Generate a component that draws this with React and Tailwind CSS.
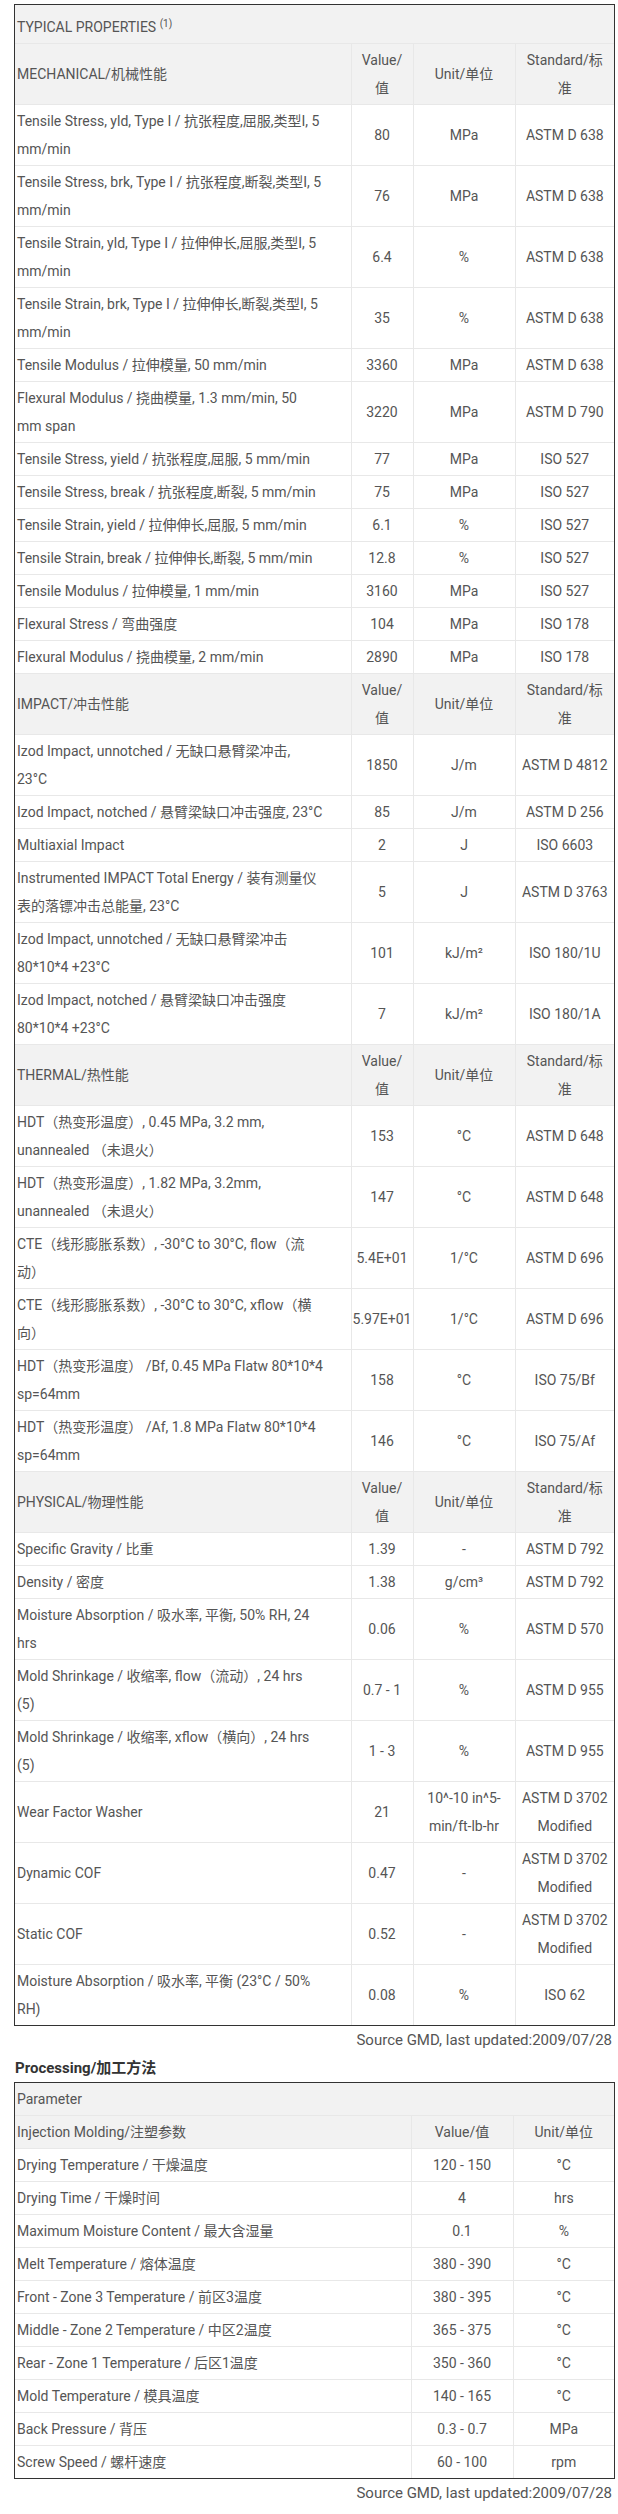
import React from "react";

const mechanical = [
  [["Tensile Stress, yld, Type I / 抗张程度,屈服,类型I, 5", "mm/min"], "80", ["MPa"], ["ASTM D 638"]],
  [["Tensile Stress, brk, Type I / 抗张程度,断裂,类型I, 5", "mm/min"], "76", ["MPa"], ["ASTM D 638"]],
  [["Tensile Strain, yld, Type I / 拉伸伸长,屈服,类型I, 5", "mm/min"], "6.4", ["%"], ["ASTM D 638"]],
  [["Tensile Strain, brk, Type I / 拉伸伸长,断裂,类型I, 5", "mm/min"], "35", ["%"], ["ASTM D 638"]],
  [["Tensile Modulus / 拉伸模量, 50 mm/min"], "3360", ["MPa"], ["ASTM D 638"]],
  [["Flexural Modulus / 挠曲模量, 1.3 mm/min, 50", "mm span"], "3220", ["MPa"], ["ASTM D 790"]],
  [["Tensile Stress, yield / 抗张程度,屈服, 5 mm/min"], "77", ["MPa"], ["ISO 527"]],
  [["Tensile Stress, break / 抗张程度,断裂, 5 mm/min"], "75", ["MPa"], ["ISO 527"]],
  [["Tensile Strain, yield / 拉伸伸长,屈服, 5 mm/min"], "6.1", ["%"], ["ISO 527"]],
  [["Tensile Strain, break / 拉伸伸长,断裂, 5 mm/min"], "12.8", ["%"], ["ISO 527"]],
  [["Tensile Modulus / 拉伸模量, 1 mm/min"], "3160", ["MPa"], ["ISO 527"]],
  [["Flexural Stress / 弯曲强度"], "104", ["MPa"], ["ISO 178"]],
  [["Flexural Modulus / 挠曲模量, 2 mm/min"], "2890", ["MPa"], ["ISO 178"]],
];

const impact = [
  [["Izod Impact, unnotched / 无缺口悬臂梁冲击,", "23°C"], "1850", ["J/m"], ["ASTM D 4812"]],
  [["Izod Impact, notched / 悬臂梁缺口冲击强度, 23°C"], "85", ["J/m"], ["ASTM D 256"]],
  [["Multiaxial Impact"], "2", ["J"], ["ISO 6603"]],
  [["Instrumented IMPACT Total Energy / 装有测量仪", "表的落镖冲击总能量, 23°C"], "5", ["J"], ["ASTM D 3763"]],
  [["Izod Impact, unnotched / 无缺口悬臂梁冲击", "80*10*4 +23°C"], "101", ["kJ/m²"], ["ISO 180/1U"]],
  [["Izod Impact, notched / 悬臂梁缺口冲击强度", "80*10*4 +23°C"], "7", ["kJ/m²"], ["ISO 180/1A"]],
];

const thermal = [
  [["HDT（热变形温度）, 0.45 MPa, 3.2 mm,", "unannealed （未退火）"], "153", ["°C"], ["ASTM D 648"]],
  [["HDT（热变形温度）, 1.82 MPa, 3.2mm,", "unannealed （未退火）"], "147", ["°C"], ["ASTM D 648"]],
  [["CTE（线形膨胀系数）, -30°C to 30°C, flow（流", "动）"], "5.4E+01", ["1/°C"], ["ASTM D 696"]],
  [["CTE（线形膨胀系数）, -30°C to 30°C, xflow（横", "向）"], "5.97E+01", ["1/°C"], ["ASTM D 696"]],
  [["HDT（热变形温度） /Bf, 0.45 MPa Flatw 80*10*4", "sp=64mm"], "158", ["°C"], ["ISO 75/Bf"]],
  [["HDT（热变形温度） /Af, 1.8 MPa Flatw 80*10*4", "sp=64mm"], "146", ["°C"], ["ISO 75/Af"]],
];

const physical = [
  [["Specific Gravity / 比重"], "1.39", ["-"], ["ASTM D 792"]],
  [["Density / 密度"], "1.38", ["g/cm³"], ["ASTM D 792"]],
  [["Moisture Absorption / 吸水率, 平衡, 50% RH, 24", "hrs"], "0.06", ["%"], ["ASTM D 570"]],
  [["Mold Shrinkage / 收缩率, flow（流动）, 24 hrs", "(5)"], "0.7 - 1", ["%"], ["ASTM D 955"]],
  [["Mold Shrinkage / 收缩率, xflow（横向）, 24 hrs", "(5)"], "1 - 3", ["%"], ["ASTM D 955"]],
  [["Wear Factor Washer"], "21", ["10^-10 in^5-", "min/ft-lb-hr"], ["ASTM D 3702", "Modified"]],
  [["Dynamic COF"], "0.47", ["-"], ["ASTM D 3702", "Modified"]],
  [["Static COF"], "0.52", ["-"], ["ASTM D 3702", "Modified"]],
  [["Moisture Absorption / 吸水率, 平衡 (23°C / 50%", "RH)"], "0.08", ["%"], ["ISO 62"]],
];

const sections = [
  { title: "MECHANICAL/机械性能", rows: mechanical },
  { title: "IMPACT/冲击性能", rows: impact },
  { title: "THERMAL/热性能", rows: thermal },
  { title: "PHYSICAL/物理性能", rows: physical },
];

const processing = [
  ["Drying Temperature / 干燥温度", "120 - 150", "°C"],
  ["Drying Time / 干燥时间", "4", "hrs"],
  ["Maximum Moisture Content / 最大含湿量", "0.1", "%"],
  ["Melt Temperature / 熔体温度", "380 - 390", "°C"],
  ["Front - Zone 3 Temperature / 前区3温度", "380 - 395", "°C"],
  ["Middle - Zone 2 Temperature / 中区2温度", "365 - 375", "°C"],
  ["Rear - Zone 1 Temperature / 后区1温度", "350 - 360", "°C"],
  ["Mold Temperature / 模具温度", "140 - 165", "°C"],
  ["Back Pressure / 背压", "0.3 - 0.7", "MPa"],
  ["Screw Speed / 螺杆速度", "60 - 100", "rpm"],
];

const cell = "border border-[#e8e8e8] py-[2px] leading-[28px] align-middle";

function Lines({ lines }) {
  return lines.map((line, i) => (
    <React.Fragment key={i}>
      {i > 0 && <br />}
      {line}
    </React.Fragment>
  ));
}

function SectionHeader({ title }) {
  return (
    <tr className="bg-[#f2f2f2]">
      <td className={`${cell} pl-[2px] text-left`}>{title}</td>
      <td className={`${cell} text-center`}>
        Value/
        <br />值
      </td>
      <td className={`${cell} text-center`}>Unit/单位</td>
      <td className={`${cell} text-center`}>
        Standard/标
        <br />准
      </td>
    </tr>
  );
}

export default function App() {
  return (
    <div className="pt-[4px] pb-[8px] bg-white text-[14px] text-[#555] font-[Roboto,'Noto_Sans_CJK_SC',sans-serif]">
      <div className="ml-[14px] w-[601px] border border-[#333]">
        <table className="w-full table-fixed border-collapse border-hidden">
          <colgroup>
            <col className="w-[336px]" />
            <col className="w-[62px]" />
            <col className="w-[102px]" />
            <col className="w-[99px]" />
          </colgroup>
          <tbody>
            <tr className="bg-[#f2f2f2]">
              <td colSpan={4} className="border border-[#e8e8e8] pl-[2px] pt-[8px] pb-[2px] leading-[28px]">
                TYPICAL PROPERTIES <sup className="text-[10px] leading-none">(1)</sup>
              </td>
            </tr>
            {sections.map((section) => (
              <React.Fragment key={section.title}>
                <SectionHeader title={section.title} />
                {section.rows.map(([label, value, unit, std], i) => (
                  <tr key={i}>
                    <td className={`${cell} pl-[2px] whitespace-nowrap`}>
                      <Lines lines={label} />
                    </td>
                    <td className={`${cell} text-center whitespace-nowrap`}>{value}</td>
                    <td className={`${cell} text-center whitespace-nowrap`}>
                      <Lines lines={unit} />
                    </td>
                    <td className={`${cell} text-center whitespace-nowrap`}>
                      <Lines lines={std} />
                    </td>
                  </tr>
                ))}
              </React.Fragment>
            ))}
          </tbody>
        </table>
      </div>

      <div className="ml-[14px] w-[601px] pr-[3px] text-right text-[15px] leading-[28px]">
        Source GMD, last updated:2009/07/28
      </div>
      <h3 className="ml-[15px] text-[15px] font-bold leading-[28px] text-[#333]">Processing/加工方法</h3>

      <div className="ml-[14px] w-[601px] border border-[#333]">
        <table className="w-full table-fixed border-collapse border-hidden">
          <colgroup>
            <col className="w-[396px]" />
            <col className="w-[102px]" />
            <col className="w-[101px]" />
          </colgroup>
          <tbody>
            <tr className="bg-[#f2f2f2]">
              <td colSpan={3} className={`${cell} pl-[2px]`}>
                Parameter
              </td>
            </tr>
            <tr className="bg-[#f2f2f2]">
              <td className={`${cell} pl-[2px]`}>Injection Molding/注塑参数</td>
              <td className={`${cell} text-center`}>Value/值</td>
              <td className={`${cell} text-center`}>Unit/单位</td>
            </tr>
            {processing.map(([label, value, unit]) => (
              <tr key={label}>
                <td className={`${cell} pl-[2px] whitespace-nowrap`}>{label}</td>
                <td className={`${cell} text-center`}>{value}</td>
                <td className={`${cell} text-center`}>{unit}</td>
              </tr>
            ))}
          </tbody>
        </table>
      </div>

      <div className="ml-[14px] w-[601px] pr-[3px] text-right text-[15px] leading-[28px]">
        Source GMD, last updated:2009/07/28
      </div>
    </div>
  );
}
